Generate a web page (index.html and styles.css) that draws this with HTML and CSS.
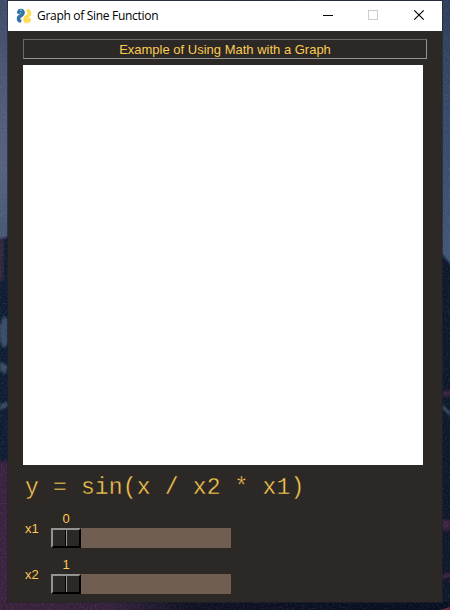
FILE: index.html
```html
<!DOCTYPE html>
<html lang="en">
<head>
<meta charset="utf-8">
<title>Graph of Sine Function</title>
<link rel="stylesheet" href="styles.css">
</head>
<body>
<svg class="wallpaper" width="450" height="610" aria-hidden="true">
  <defs>
    <linearGradient id="left" x1="0" y1="0" x2="0" y2="1">
      <stop offset="0" stop-color="#3d4b68"/><stop offset=".2" stop-color="#535b7b"/><stop offset=".28" stop-color="#53617e"/><stop offset=".45" stop-color="#3f506e"/>
    </linearGradient>
    <linearGradient id="right" x1="0" y1="0" x2="0" y2="1">
      <stop offset="0" stop-color="#2e3e5a"/><stop offset=".42" stop-color="#3f5775"/>
    </linearGradient>
    <linearGradient id="ground" x1="0" y1="0" x2="1" y2="0">
      <stop offset="0" stop-color="#38203a"/><stop offset=".25" stop-color="#33203a"/><stop offset=".42" stop-color="#0e1022"/><stop offset="1" stop-color="#050d20"/>
    </linearGradient>
    <filter id="grain" x="0" y="0" width="1" height="1">
      <feTurbulence type="fractalNoise" baseFrequency=".6" numOctaves="2" seed="4"/>
      <feColorMatrix values="0 0 0 0 .5  0 0 0 0 .5  0 0 0 0 .6  1 0 0 0 -.42"/>
    </filter>
    <filter id="soft"><feGaussianBlur stdDeviation="1"/></filter>
  </defs>
  <rect width="225" height="610" fill="url(#left)"/>
  <rect x="225" width="225" height="610" fill="url(#right)"/>
  <g filter="url(#soft)">
    <path d="M-4 240 12 236V614H-4z" fill="#101a32"/>
    <path d="M-4 242 4 238 3 280 -4 285z" fill="#30253e"/>
    <path d="M0 325 4 316 8 320V344L3 348 0 340zM0 362 8 366 5 374 0 370zM0 405 8 402V406L0 410z" fill="#384e68"/>
    <path d="M-4 462 12 460V614H-4z" fill="#38203c"/>
    <path d="M438 250 454 268V614H438z" fill="#0b162b"/>
    <path d="M442 392 450 390V396H442zM442 520H450V530H442zM442 575 450 572V577L442 579z" fill="#3b2140"/>
    <path d="M442 406 450 414" stroke="#3d5870" stroke-width="2" fill="none"/>
  </g>
  <rect y="602" width="450" height="8" fill="url(#ground)"/>
  <path d="M440 610 450 607V610z" fill="#6b2439"/>
  <rect width="450" height="610" filter="url(#grain)" opacity=".3"/>
</svg>
<main class="window">
  <header class="titlebar">
    <svg class="logo" width="16" height="16" viewBox="0 0 16 16">
      <path d="M2.800 4.200C3.300 2.200 6.800 1.800 7 4.500C7.200 7.800 2.600 7.700 2.500 10.200Q2.500 12 3.700 12.800" fill="none" stroke="#3475a8" stroke-width="3.700" stroke-linecap="round"/>
      <path d="M12.300 3Q13.600 4 13.500 5.800C13.400 8.400 8.900 8.300 9 11.500C9.200 14.200 12.500 13.800 13.200 11.800" fill="none" stroke="#ffdc52" stroke-width="3.700" stroke-linecap="round"/>
      <circle cx="5" cy="2.200" r=".6" fill="#fff"/><circle cx="11" cy="14" r=".6" fill="#fff"/>
    </svg>
    <h1 class="title">Graph of Sine Function</h1>
    <svg class="controls" width="136" height="30" viewBox="0 0 136 30">
      <g shape-rendering="crispEdges"><path d="M17 14.5h10" stroke="#000"/><rect x="62.500" y="9.500" width="9" height="9" fill="none" stroke="#ccc"/></g>
      <path d="M108.300 9.300l9.400 9.400M117.700 9.300l-9.400 9.400" stroke="#000" stroke-width="1.200"/>
    </svg>
  </header>
  <section class="content">
    <div class="caption">Example of Using Math with a Graph</div>
    <div class="graph"></div>
    <div class="formula">y = sin(x / x2 * x1)</div>
    <div class="row">
      <span class="label">x1</span>
      <div class="slider"><span class="value">0</span><div class="track"><div class="thumb"><i></i><i></i></div></div></div>
    </div>
    <div class="row">
      <span class="label">x2</span>
      <div class="slider"><span class="value">1</span><div class="track"><div class="thumb"><i></i><i></i></div></div></div>
    </div>
  </section>
</main>
</body>
</html>
```
FILE: styles.css
```css
* { box-sizing: border-box; }
body {
  margin: 0;
  width: 450px;
  height: 610px;
  padding: 1px 8px 8px;
  overflow: hidden;
  background: #17213a;
  font: 13px/15px "Liberation Sans", Arial, sans-serif;
}
.wallpaper { position: absolute; inset: 0; z-index: -1; }
.window {
  width: 434px;
  height: 601px;
  background: #2c2825;
  box-shadow: 0 0 0 1px rgba(32, 34, 43, .65);
}
.titlebar {
  display: flex;
  align-items: center;
  height: 30px;
  padding-left: 8px;
  background: #fff;
}
.title {
  margin: 0 0 0 5px;
  color: #000;
  font: 12px/16px "Open Sans", "Noto Sans", sans-serif;
  letter-spacing: -.3px;
  white-space: nowrap;
}
.controls { margin-left: auto; margin-right: 0; }
.content { padding: 8px 15px 0; color: #fdcb52; }
.caption {
  width: 404px;
  height: 20px;
  border: 1px solid;
  border-color: #6b6967 #959391 #959391 #6b6967;
  line-height: 19px;
  text-align: center;
}
.graph { width: 400px; height: 400px; margin-top: 6px; background: #fff; }
.formula {
  height: 46px;
  padding: 9px 0 0 2px;
  font: 23px/28px "Liberation Mono", "Courier New", monospace;
  letter-spacing: .17px;
  white-space: pre;
  -webkit-text-stroke: .4px #2c2825;
}
.row { display: flex; height: 46px; }
.label { width: 28px; padding: 10px 0 0 2px; }
.slider { width: 180px; }
.value { display: block; width: 30px; height: 17px; text-align: center; }
.track { height: 20px; background: #705e52; }
.thumb {
  display: flex;
  width: 30px;
  height: 20px;
  border: solid;
  border-width: 2px;
  border-color: #959391 #000 #000 #959391;
  background: #2c2825;
}
.thumb i { width: 13px; }
.thumb i:first-child { border-right: 1px solid #000; }
.thumb i:last-child { border-left: 1px solid #959391; }
```
